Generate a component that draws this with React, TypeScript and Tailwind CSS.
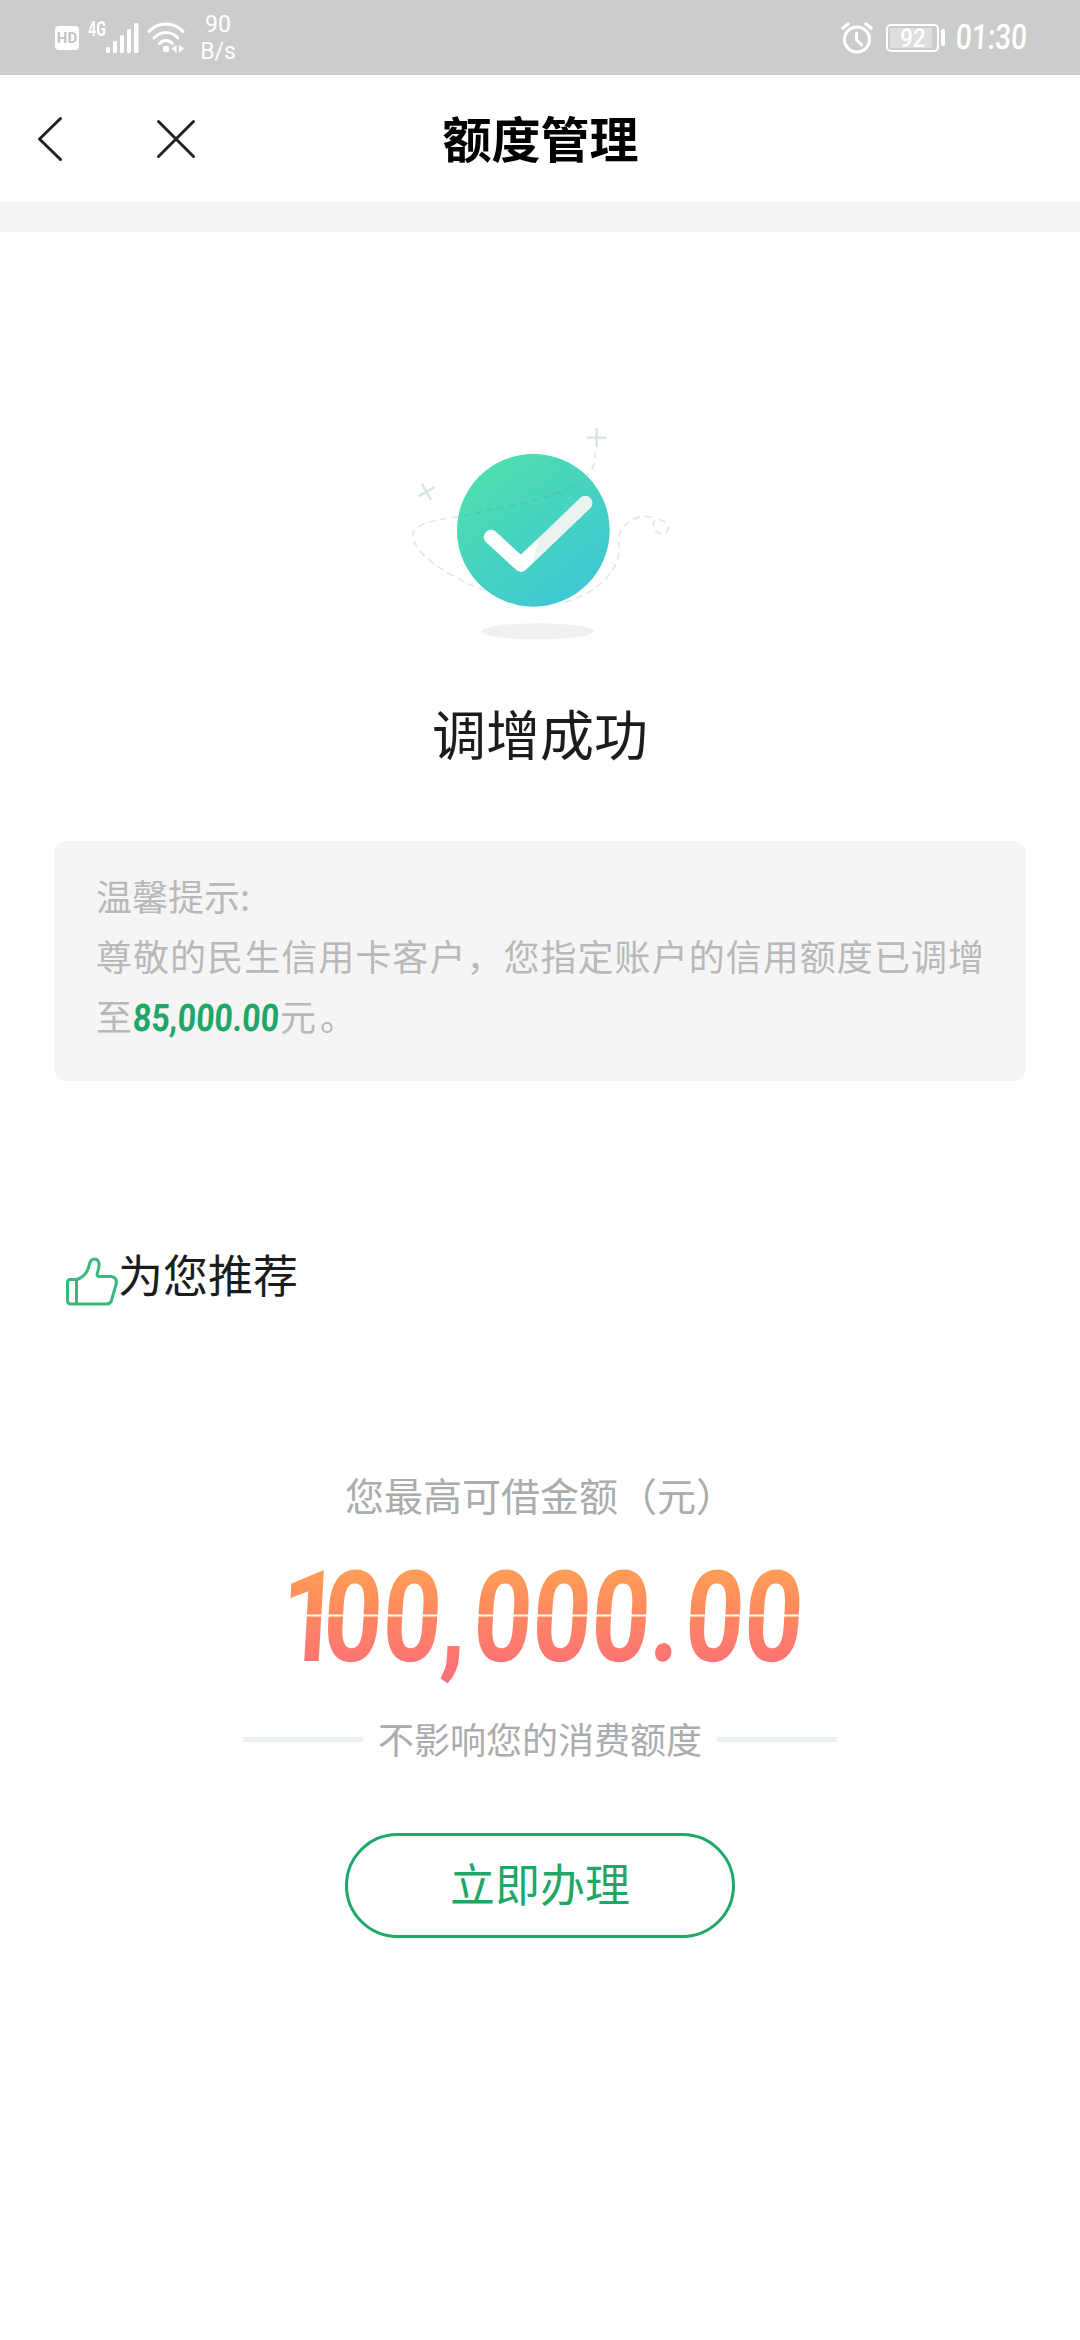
import { memo, useId } from 'react';

const StatusBar = memo(() => (
  <div className="flex h-[75px] items-center justify-between bg-[#cccccc] pl-[55px] pr-[53px] text-white">
    <div className="flex h-full items-center">
      <div className="mt-[1px] flex h-6 w-6 items-center justify-center rounded-[4px] bg-white font-[Roboto,sans-serif] text-[15px] font-bold leading-none text-[#c4c4c4]">
        HD
      </div>
      <span className="-mt-[18px] ml-[9px] inline-block w-[18px] origin-left scale-x-[0.72] font-[Roboto,sans-serif] text-[20px] font-bold leading-none">
        4G
      </span>
      {/* Signal */}
      <svg className="h-[32px] w-[34px]" viewBox="0 0 34 32" fill="#fff">
        <rect x="0" y="25" width="4" height="6" rx="1.5" />
        <rect x="7" y="19" width="4" height="12" rx="1.5" />
        <rect x="14" y="13" width="4" height="18" rx="1.5" />
        <rect x="21" y="7" width="4" height="24" rx="1.5" />
        <rect x="28" y="1" width="4.5" height="30" rx="1.5" />
      </svg>
      {/* Wi-Fi */}
      <svg className="ml-[7px] h-[32px] w-[38px]" viewBox="0 0 38 32" fill="none" stroke="#fff" strokeWidth="3" strokeLinecap="round">
        <path d="M2 9.5C11 -.5 27 -.5 36 9.5" />
        <path d="M7 16C14 8.500 24 8.500 31 16" />
        <path d="M12.500 21.500C16.500 17.500 21.500 17.500 25.500 21.500" />
        <circle cx="19" cy="27" r="3.200" fill="#fff" stroke="none" />
        <path d="M29.500 23v8l-5-4.500zM32 23v8l5-4.500z" fill="#fff" stroke="none" />
      </svg>
      <div className="ml-[15px] mt-[1px] w-[36px] whitespace-nowrap text-center font-[Roboto,sans-serif] text-[23px] leading-[27px]">
        90
        <br />
        B/s
      </div>
    </div>

    <div className="flex h-full items-center">
      {/* Alarm */}
      <svg className="h-[32px] w-[32px]" viewBox="0 0 32 32" fill="none" stroke="#fff" strokeWidth="3" strokeLinecap="round">
        <circle cx="16" cy="17.500" r="12.500" />
        <path d="M2 6l5-4M30 6l-5-4" strokeWidth="3.500" />
        <path d="M15.500 11v7l5 5" strokeLinejoin="round" />
      </svg>
      <div className="ml-[13px] flex h-[28px] w-[53px] rounded-[5px] border-2 border-white p-[2px]">
        <div className="flex w-[42px] items-center justify-center bg-[#dedede] pl-1">
          <span className="inline-block -skew-x-4 scale-x-[0.86] font-[Roboto,sans-serif] text-[26px] font-medium leading-none">
            92
          </span>
        </div>
      </div>
      <div className="ml-[2px] h-[17px] w-[4px] rounded-[2px] bg-white" />
      <div className="ml-[11px] w-[71px]">
        <span className="inline-block origin-left -skew-x-4 scale-x-[0.8] whitespace-nowrap font-[Roboto,sans-serif] text-[35px] font-medium leading-none">
          01:30
        </span>
      </div>
    </div>
  </div>
));

StatusBar.displayName = 'StatusBar';

const Header = memo(() => (
  <header className="grid h-[127px] grid-cols-[1fr_auto_1fr] items-center pl-[36px]">
    <div className="flex items-center gap-[92px]">
      <button aria-label="Back">
        <svg className="block h-[46px] w-[28px]" viewBox="0 0 28 46" fill="none" stroke="#222" strokeWidth="3" strokeLinecap="round">
          <path d="M24.500 2.500L3.500 23l21 20.500" strokeLinejoin="round" />
        </svg>
      </button>
      <button aria-label="Close">
        <svg className="block h-[40px] w-[40px]" viewBox="0 0 40 40" stroke="#222" strokeWidth="3" strokeLinecap="round">
          <path d="M2.500 2.500l35 35M37.500 2.500l-35 35" />
        </svg>
      </button>
    </div>
    <h1 className="-ml-[35px] -mt-1 text-[49px] font-bold leading-none text-black">额度管理</h1>
    <div />
  </header>
));

Header.displayName = 'Header';

const SuccessIllustration = () => {
  const id = useId();

  return (
    <svg className="block h-[260px] w-[300px]" viewBox="0 0 900 780" fill="none">
      <defs>
        <linearGradient id={`${id}-disc`} x1="280" y1="210" x2="570" y2="580" gradientUnits="userSpaceOnUse">
          <stop offset="0" stopColor="#4edeae" />
          <stop offset="1" stopColor="#3fc8d3" />
        </linearGradient>
      </defs>
      <ellipse cx="443" cy="694" rx="169" ry="24" fill="#eff2f1" />
      {/* Orbit behind the disc */}
      <g stroke="#e1e8e6" strokeWidth="5" strokeDasharray="21 14">
        <path d="M616 154C618 190 606 212 590 226" />
        <path d="M206 350C130 360 72 372 68 405C66 450 150 520 285 572" />
        <path d="M525 606C625 580 690 510 688 440C670 370 760 330 795 358C782 380 795 400 815 402C840 400 848 362 800 358" />
      </g>
      <circle cx="430" cy="391" r="229" fill={`url(#${id}-disc)`} />
      <path d="M220 348C350 315 480 305 580 240" stroke="#43cbb0" strokeWidth="4" strokeDasharray="21 14" />
      {/* Check mark */}
      <path d="M394 493L586 309" stroke="#eaf3f1" strokeWidth="43" strokeLinecap="round" />
      <path d="M303 411L392 493" stroke="#fff" strokeWidth="43" strokeLinecap="round" />
      <path d="M392 464L447 413L428 488L408 508Q394 522 378 508L366 490z" fill="#fff" />
      {/* Sparks */}
      <path d="M620 84v58M591 113h58M86 289l48-28M96 252l27 47" stroke="#d2e5e2" strokeWidth="7" />
    </svg>
  );
};

const ThumbIcon = () => (
  <svg className="mt-[6px] block h-[50px] w-[53px]" viewBox="0 0 53 50" fill="none" stroke="#39b87c" strokeWidth="3" strokeLinejoin="round" strokeLinecap="round">
    <path d="M11.500 22.500H5.500Q2.500 22.500 2.500 25.500V43.500Q2.500 47 6 47H41.500Q45.500 47 46.500 43.500L51.300 26.500Q52 20 46 19.500H34.500Q31.500 19.500 32.200 16.500Q34.500 10 34 6Q33 2 29.300 2Q25.800 2.200 24.800 6Q22.500 17 16 20.500Q14 22 11.500 22.500V47" />
  </svg>
);

const Notice = () => (
  <section className="mx-[54px] h-[240px] rounded-[12px] bg-[#f5f5f5] px-[42px] pt-[24px] text-[36px] leading-[60px] text-[#b9b9b9]">
    <p>温馨提示:</p>
    <p className="whitespace-nowrap [text-align-last:justify]">尊敬的民生信用卡客户，您指定账户的信用额度已调增</p>
    <div className="flex">
      <span>至</span>
      <div className="ml-[1px] w-[147px]">
        <span className="inline-block origin-left -skew-x-4 scale-x-[0.845] whitespace-nowrap font-[Roboto,sans-serif] text-[38px] font-bold text-[#1fa768]">
          85,000.00
        </span>
      </div>
      <span>
        元<span className="ml-1">。</span>
      </span>
    </div>
  </section>
);

const LoanOffer = () => (
  <section className="flex flex-col items-center">
    <p className="text-[39px] leading-[60px] text-[#aaacad]">您最高可借金额（元）</p>
    <div className="mt-[26px] h-[135px] w-[507px]">
      {/* The gap in the gradient splits the digits into upper and lower segments */}
      <span className="-ml-[6px] inline-block origin-left -skew-x-4 scale-x-[0.81] whitespace-nowrap bg-[linear-gradient(#ff9d55_20px,#ff8860_65px,transparent_65px,transparent_67px,#ff8762_67px,#fb7077_120px)] bg-clip-text font-[Roboto,sans-serif] text-[127px] font-bold leading-[135px] text-transparent">
        <span className="-mr-[20px]">1</span>00<span className="mr-[8px]">,</span>000<span className="mr-[6px]">.</span>00
      </span>
    </div>
    <div className="mt-[26px] flex items-center">
      <div className="h-[5px] w-[120px] bg-[#ecf1f0]" />
      <p className="-mt-[3px] mx-[15px] text-[36px] leading-[60px] text-[#aaacad]">不影响您的消费额度</p>
      <div className="h-[5px] w-[120px] bg-[#ecf1f0]" />
    </div>
    <button className="mt-[65px] h-[105px] w-[390px] rounded-full border-[3px] border-[#1fa768] pb-[7px] text-[45px] leading-none text-[#1fa768]">
      立即办理
    </button>
  </section>
);

export default function App() {
  return (
    <div className="h-[2340px] w-[1080px] overflow-hidden bg-white font-['Noto_Sans_CJK_SC',sans-serif]">
      <StatusBar />
      <Header />
      <div className="h-[30px] bg-[#f5f5f5]" />

      <main>
        <div className="flex flex-col items-center pt-[168px]">
          <SuccessIllustration />
          <h2 className="mt-[33px] h-[148px] text-[54px] leading-[80px] text-[#1c1c1c]">调增成功</h2>
        </div>

        <Notice />

        <div className="flex items-center pl-[65px] pt-[168px]">
          <ThumbIcon />
          <h3 className="-mt-[10px] text-[45px] leading-[70px] text-[#1c1c1c]">为您推荐</h3>
        </div>

        <div className="pt-[155px]">
          <LoanOffer />
        </div>
      </main>
    </div>
  );
}
